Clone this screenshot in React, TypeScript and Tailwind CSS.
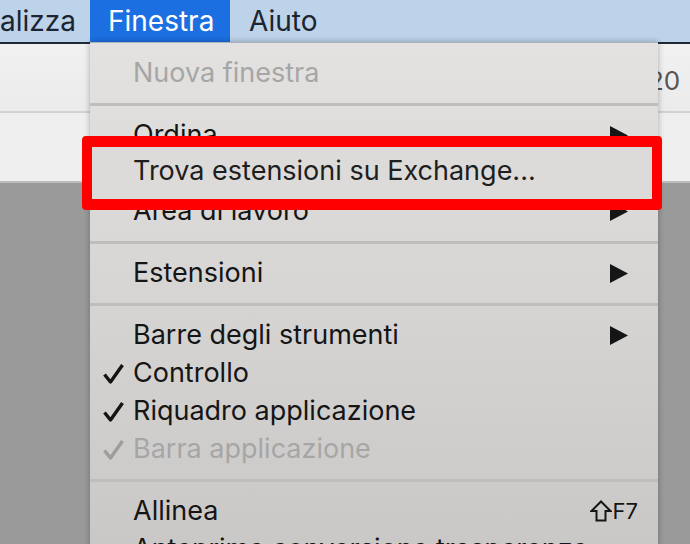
import React from 'react';

type MenuItem =
  | { kind: 'sep' }
  | {
      kind: 'item';
      label: string;
      disabled?: boolean;
      checked?: boolean;
      arrow?: boolean;
      shortcut?: boolean;
    };

const items: MenuItem[] = [
  { kind: 'item', label: 'Nuova finestra', disabled: true },
  { kind: 'sep' },
  { kind: 'item', label: 'Ordina', arrow: true },
  { kind: 'item', label: 'Trova estensioni su Exchange...' },
  { kind: 'item', label: 'Area di lavoro', arrow: true },
  { kind: 'sep' },
  { kind: 'item', label: 'Estensioni', arrow: true },
  { kind: 'sep' },
  { kind: 'item', label: 'Barre degli strumenti', arrow: true },
  { kind: 'item', label: 'Controllo', checked: true },
  { kind: 'item', label: 'Riquadro applicazione', checked: true },
  { kind: 'item', label: 'Barra applicazione', checked: true, disabled: true },
  { kind: 'sep' },
  { kind: 'item', label: 'Allinea', shortcut: true },
  { kind: 'item', label: 'Anteprima conversione trasparenze' },
];

const CheckMark: React.FC<{ dim?: boolean }> = ({ dim }) => (
  <svg width="23" height="23" viewBox="0 0 23 23">
    <path
      d="M2.5 12.5 L8.5 20 L20.5 3"
      fill="none"
      stroke={dim ? '#9c9c9c' : '#141414'}
      strokeWidth="3.4"
      strokeLinejoin="round"
    />
  </svg>
);

const SubArrow = () => (
  <svg width="18" height="19" viewBox="0 0 18 19">
    <polygon points="0,0 18,9.5 0,19" fill="#151515" />
  </svg>
);

const ShiftKey = () => (
  <svg width="22" height="22" viewBox="0 0 22 22">
    <path
      d="M11 1.5 L20.5 11 H15.5 V20.5 H6.5 V11 H1.5 Z"
      fill="none"
      stroke="#151515"
      strokeWidth="2"
      strokeLinejoin="miter"
    />
  </svg>
);

const SideColumn: React.FC<{ right?: boolean }> = ({ right }) => (
  <div className={right ? 'flex flex-1 flex-col' : 'flex w-[90px] flex-col'}>
    <div className="h-[2px] bg-[#1f2a36]" />
    <div className="flex h-[67px] items-start bg-gradient-to-b from-[#f1f1f1] to-[#ebebeb]">
      {right && (
        <span className="ml-[-10px] mt-[23px] text-[26px] leading-[28px] text-[#555]">20</span>
      )}
    </div>
    <div className="h-[2px] bg-[#d2d2d2]" />
    <div className="h-[68px] bg-[#efefef]" />
    <div className="h-[2px] bg-[#bdbdbd]" />
    <div className="flex-1 bg-[#9a9a9a]" />
  </div>
);

export default function App() {
  return (
    <div className="relative flex h-[544px] w-[690px] flex-col overflow-hidden bg-[#9a9a9a] font-['Inter','Liberation_Sans',sans-serif]">
      {/* menubar */}
      <div className="flex h-[44px] items-stretch bg-[#bdd3ea] text-[28px] text-[#1b2430]">
        <div className="flex w-[90px] items-center">alizza</div>
        <div className="flex w-[140px] items-center bg-[#1b6fe0] pl-[18px] text-white">Finestra</div>
        <div className="flex items-center pl-[19px]">Aiuto</div>
      </div>

      <div className="flex flex-1">
        <SideColumn />

        {/* menu */}
        <div className="relative z-10 flex w-[568px] flex-col border-t border-[#aab3bd] bg-gradient-to-b from-[#e3e2e1] to-[#c8c7c6] pt-[11px] shadow-[0_0_6px_rgba(0,0,0,0.3)]">
          {items.map((it, i) =>
            it.kind === 'sep' ? (
              <div key={i} className="flex h-[24px] shrink-0 flex-col pt-[11px]">
                <div className="h-[3px] bg-[#bfbebd]" />
              </div>
            ) : (
              <div
                key={i}
                className={`flex h-[38px] shrink-0 items-center text-[27px] leading-[38px] ${
                  it.disabled ? 'text-[#a6a6a6]' : 'text-[#151515]'
                }`}
              >
                <div className="flex w-[43px] justify-start pl-[12px]">
                  {it.checked && <CheckMark dim={it.disabled} />}
                </div>
                <span className="whitespace-nowrap">{it.label}</span>
                {it.arrow && (
                  <div className="ml-auto mr-[30px] flex">
                    <SubArrow />
                  </div>
                )}
                {it.shortcut && (
                  <div className="ml-auto mr-[20px] flex items-center gap-[1px] text-[22px] text-[#151515]">
                    <ShiftKey />
                    <span>F7</span>
                  </div>
                )}
              </div>
            )
          )}
        </div>

        <SideColumn right />
      </div>

      {/* red highlight annotation */}
      <div className="absolute left-[82px] top-[136px] z-20 flex h-[74px] w-[580px] items-center rounded-[4px] border-x-[10px] border-y-[11px] border-[#ff0000] bg-[#dcdbda] pb-[4px] pl-[41px] text-[27px] leading-[48px] text-[#1e1e1e]">
        Trova estensioni su Exchange...
      </div>
    </div>
  );
}
